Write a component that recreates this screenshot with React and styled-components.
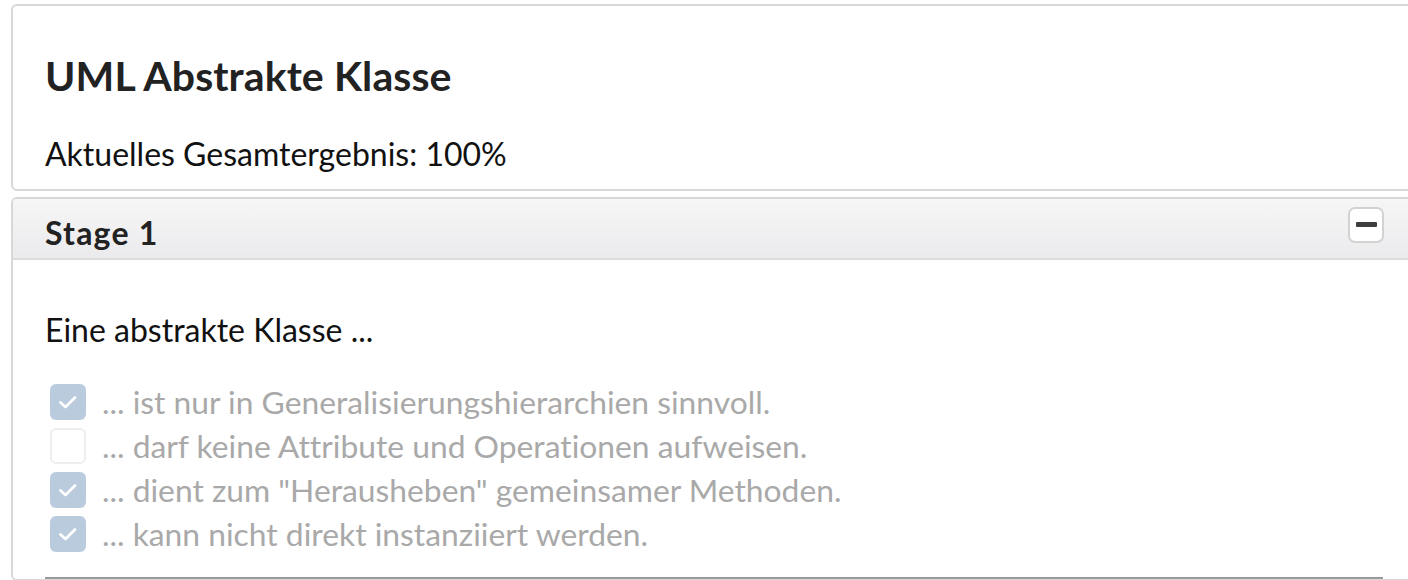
import React from "react";
import styled, { createGlobalStyle } from "styled-components";

const GlobalStyle = createGlobalStyle`
  html, body {
    margin: 0;
    padding: 0;
    overflow: hidden;
    background: #ffffff;
  }
  body {
    font-family: Lato, "Open Sans", sans-serif;
    font-variant-ligatures: none;
    color: #222222;
  }
`;

const Page = styled.div`
  display: flex;
  flex-direction: column;
  gap: 6px;
  padding: 4px 0 0 11px;
`;

const Card = styled.section`
  width: 1407px;
  border: 2px solid #d8d8d8;
  border-radius: 6px;
  background: #ffffff;
  box-sizing: border-box;
`;

const Summary = styled(Card)`
  padding: 46px 32px 16px;
  height: 187px;
`;

const Title = styled.h1`
  margin: 0;
  font-size: 41px;
  font-weight: 700;
  letter-spacing: 0.1px;
  line-height: 48px;
  color: #222222;
`;

const Score = styled.p`
  margin: 36px 0 0;
  font-size: 32px;
  line-height: 36px;
  color: #111111;
`;

const StageHeader = styled.header`
  display: flex;
  align-items: center;
  justify-content: space-between;
  height: 61px;
  padding: 0 33px 0 32px;
  background: linear-gradient(#f6f6f7, #ebebed);
  border-bottom: 2px solid #dcdcdc;
  border-radius: 4px 4px 0 0;
  box-sizing: border-box;
`;

const StageTitle = styled.h2`
  margin: 0;
  padding-top: 8px;
  font-size: 32px;
  font-weight: 700;
  letter-spacing: 1.2px;
  color: #222222;
`;

const ToggleButton = styled.button`
  display: flex;
  align-items: center;
  justify-content: center;
  width: 36px;
  height: 36px;
  padding: 0;
  margin-top: -8px;
  margin-right: -1px;
  border: 2px solid #d2d2d2;
  border-radius: 7px;
  background: #ffffff;
  cursor: pointer;
  box-sizing: border-box;

  span {
    display: block;
    width: 21px;
    height: 5px;
    background: #3e3e3e;
    border-radius: 1px;
  }
`;

const StageBody = styled.div`
  padding: 50px 33px 0 32px;
`;

const Question = styled.p`
  margin: 0 0 30px;
  font-size: 32px;
  line-height: 40px;
  color: #111111;
`;

const OptionList = styled.ul`
  list-style: none;
  margin: 0;
  padding: 0;
  display: flex;
  flex-direction: column;
`;

const Option = styled.li`
  display: flex;
  align-items: center;
  gap: 16px;
  height: 44px;
  padding-left: 5px;
  font-size: 31.8px;
  color: #a9a9a9;
`;

const Box = styled.span`
  display: flex;
  align-items: center;
  justify-content: center;
  width: 36px;
  height: 36px;
  border-radius: 6px;
  box-sizing: border-box;
  flex-shrink: 0;
  background: ${(p) => (p.$checked ? "#b9cbdd" : "#ffffff")};
  border: ${(p) => (p.$checked ? "none" : "2px solid #eeeeee")};
`;

const Divider = styled.hr`
  margin: 21px 0 0;
  border: none;
  border-top: 2px solid #9a9a9a;
`;

const options = [
  { text: '... ist nur in Generalisierungshierarchien sinnvoll.', checked: true },
  { text: '... darf keine Attribute und Operationen aufweisen.', checked: false },
  { text: '... dient zum "Herausheben" gemeinsamer Methoden.', checked: true },
  { text: '... kann nicht direkt instanziiert werden.', checked: true },
];

const Check = () => (
  <svg width="22" height="18" viewBox="0 0 22 18">
    <path
      d="M3.5 9.5 L8.5 14 L18 4.5"
      fill="none"
      stroke="#ffffff"
      strokeWidth="2.8"
      strokeLinecap="round"
      strokeLinejoin="round"
    />
  </svg>
);

const App = () => {
  return (
    <>
      <GlobalStyle />
      <Page>
        <Summary>
          <Title>UML Abstrakte Klasse</Title>
          <Score>Aktuelles Gesamtergebnis: 100%</Score>
        </Summary>
        <Card>
          <StageHeader>
            <StageTitle>Stage 1</StageTitle>
            <ToggleButton aria-label="Einklappen">
              <span />
            </ToggleButton>
          </StageHeader>
          <StageBody>
            <Question>Eine abstrakte Klasse ...</Question>
            <OptionList>
              {options.map((o) => (
                <Option key={o.text}>
                  <Box $checked={o.checked}>{o.checked && <Check />}</Box>
                  {o.text}
                </Option>
              ))}
            </OptionList>
            <Divider />
          </StageBody>
        </Card>
      </Page>
    </>
  );
};

export default App;
